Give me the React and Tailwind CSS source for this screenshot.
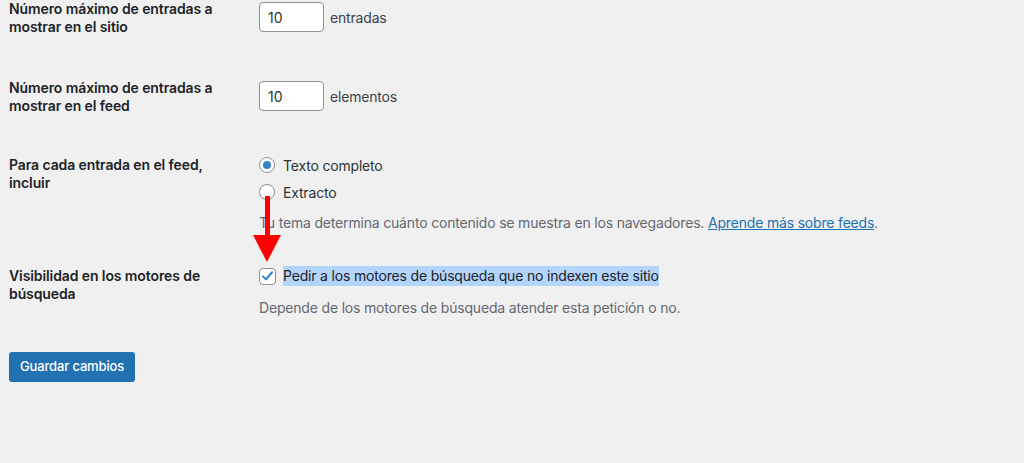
import React from 'react';

const font = { fontFamily: 'Inter, "Noto Sans", sans-serif' };

function Radio({ checked, label }) {
  return (
    <label className="flex items-center h-[18px] text-[14px] text-[#2c3338] tracking-[-0.18px]">
      <span className="w-[16px] h-[16px] rounded-full border border-[#8c8f94] bg-white flex items-center justify-center shrink-0">
        {checked && <span className="w-[8px] h-[8px] rounded-full bg-[#3582c4]" />}
      </span>
      <span className="ml-[8px]">{label}</span>
    </label>
  );
}

export default function App() {
  return (
    <div className="relative min-h-[463px] w-[1024px] bg-[#f0f0f1] pl-[9px] overflow-hidden" style={font}>
      {/* Entradas en el sitio */}
      <div className="flex">
        <div className="w-[250px] shrink-0 text-[14px] font-semibold leading-[18px] text-[#1d2327] tracking-[-0.1px]">
          Número máximo de entradas a<br />mostrar en el sitio
        </div>
        <div className="flex items-center gap-[6px] mt-[2px] h-[30px]">
          <div className="w-[65px] h-[30px] bg-white border border-[#8c8f94] rounded-[4px] px-[8px] flex items-center text-[14px] text-[#2c3338]">
            10
          </div>
          <span className="text-[14px] text-[#3c434a] tracking-[-0.18px]">entradas</span>
        </div>
      </div>

      {/* Entradas en el feed */}
      <div className="flex mt-[42px]">
        <div className="w-[250px] shrink-0 text-[14px] font-semibold leading-[18px] text-[#1d2327] tracking-[-0.1px] pt-[1px]">
          Número máximo de entradas a<br />mostrar en el feed
        </div>
        <div className="flex items-center gap-[6px] mt-[3px] h-[30px]">
          <div className="w-[65px] h-[30px] bg-white border border-[#8c8f94] rounded-[4px] px-[8px] flex items-center text-[14px] text-[#2c3338]">
            10
          </div>
          <span className="text-[14px] text-[#3c434a] tracking-[-0.18px]">elementos</span>
        </div>
      </div>

      {/* Incluir en el feed */}
      <div className="flex mt-[40px]">
        <div className="w-[250px] shrink-0 text-[14px] font-semibold leading-[18px] text-[#1d2327] tracking-[-0.1px] pt-[1px]">
          Para cada entrada en el feed,<br />incluir
        </div>
        <div className="flex flex-col pt-[1px]">
          <Radio checked label="Texto completo" />
          <div className="mt-[9px]">
            <Radio label="Extracto" />
          </div>
          <p className="mt-[13px] text-[14px] leading-[18px] text-[#646970] tracking-[-0.18px]">
            Tu tema determina cuánto contenido se muestra en los navegadores.{' '}
            <a className="text-[#2271b1] underline">Aprende más sobre feeds</a>.
          </p>
        </div>
      </div>

      {/* Visibilidad */}
      <div className="flex mt-[34px]">
        <div className="w-[250px] shrink-0 text-[14px] font-semibold leading-[18px] text-[#1d2327] tracking-[-0.1px] pt-[1px]">
          Visibilidad en los motores de<br />búsqueda
        </div>
        <div className="flex flex-col">
          <label className="flex items-center h-[20px]">
            <span className="w-[17px] h-[17px] rounded-[4px] border border-[#8c8f94] bg-white flex items-center justify-center shrink-0">
              <svg viewBox="0 0 20 20" className="w-[16px] h-[16px]">
                <path d="M4 10.5 L8 14.5 L16 5" fill="none" stroke="#3582c4" strokeWidth="2.8" strokeLinecap="round" strokeLinejoin="round" />
              </svg>
            </span>
            <span className="ml-[7px] bg-[#b3d4fc] text-[14px] leading-[20px] text-[#1d2327] tracking-[-0.18px]">
              Pedir a los motores de búsqueda que no indexen este sitio
            </span>
          </label>
          <p className="mt-[13px] text-[14px] leading-[18px] text-[#646970] tracking-[-0.18px]">
            Depende de los motores de búsqueda atender esta petición o no.
          </p>
        </div>
      </div>

      <button className="mt-[35px] h-[30px] px-[11px] rounded-[3px] bg-[#2271b1] text-white text-[13px] font-medium tracking-[-0.15px]">
        Guardar cambios
      </button>

      {/* Flecha roja */}
      <svg className="absolute left-[252px] top-[195px]" width="30" height="68" viewBox="0 0 30 68">
        <rect x="13" y="1" width="5" height="42" fill="#ff0000" />
        <polygon points="1,40 29,40 15,67" fill="#ff0000" />
      </svg>
    </div>
  );
}
